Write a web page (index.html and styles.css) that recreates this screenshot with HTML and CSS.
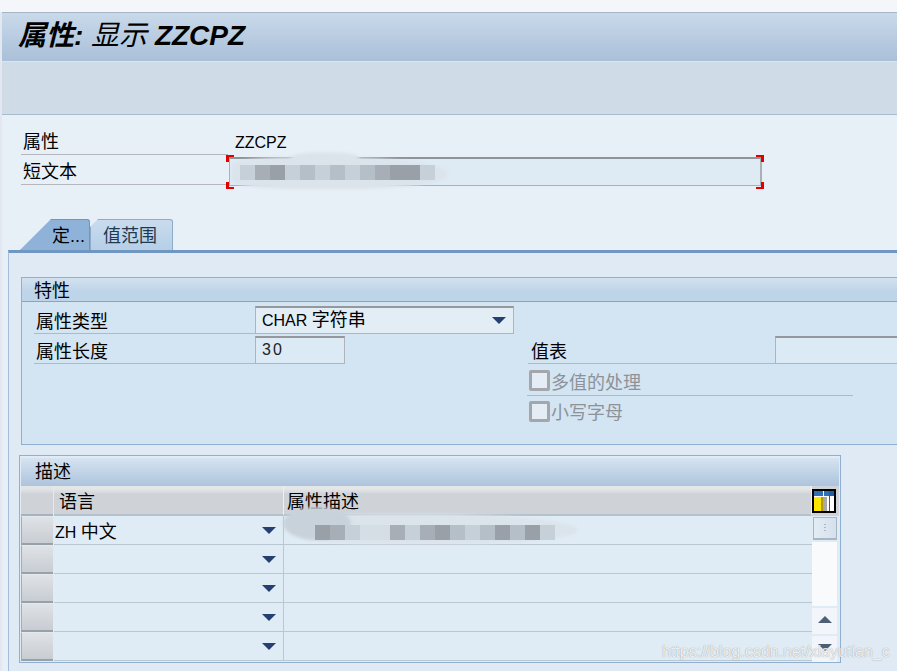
FILE: index.html
```html
<!DOCTYPE html>
<html lang="zh-CN">
<head>
    <meta charset="UTF-8">
    <meta name="viewport" content="width=device-width, initial-scale=1.0">
    <title>属性: 显示 ZZCPZ</title>
    <link rel="stylesheet" href="styles.css">
</head>
<body>

    <div class="top-strip"></div>

    <!-- TITLE + TOOLBAR -->
    <header class="title-bar">
        <h1>属性: <span class="title-light">显示</span> ZZCPZ</h1>
    </header>
    <div class="toolbar"></div>

    <!-- HEADER FIELDS -->
    <section class="head-fields">
        <div class="head-row">
            <label class="head-label">属性</label>
            <span class="head-value">ZZCPZ</span>
        </div>
        <div class="head-row">
            <label class="head-label">短文本</label>
            <div class="long-input">
                <i class="mark mark-tl"></i><i class="mark mark-bl"></i>
                <i class="mark mark-tr"></i><i class="mark mark-br"></i>
            </div>
        </div>
    </section>

    <!-- TABS -->
    <nav class="tabs">
        <a class="tab tab-active" href="#">定...</a>
        <a class="tab" href="#">值范围</a>
    </nav>

    <main class="panel">

        <!-- 特性 -->
        <section class="group">
            <div class="group-title">特性</div>
            <div class="group-body">
                <div class="form-row">
                    <label class="form-label">属性类型</label>
                    <div class="combo"><span>CHAR <span class="cjk">字符串</span></span><i class="arrow combo-arrow"></i></div>
                </div>
                <div class="form-row">
                    <label class="form-label">属性长度</label>
                    <div class="input input-short">30</div>
                    <label class="form-label form-label-right">值表</label>
                    <div class="input input-right"></div>
                </div>
                <div class="check-row check-row-line">
                    <span class="checkbox"></span><span>多值的处理</span>
                </div>
                <div class="check-row">
                    <span class="checkbox"></span><span>小写字母</span>
                </div>
            </div>
        </section>

        <!-- 描述 -->
        <section class="table-box">
            <div class="table-title">描述</div>
            <div class="table-head">
                <div class="sel-head"></div>
                <div class="col-lang col-head">语言</div>
                <div class="col-desc col-head">属性描述</div>
                <div class="col-config">
                    <svg width="24" height="24" viewBox="0 0 24 24">
                        <rect width="24" height="24" fill="#000"/>
                        <rect x="2" y="2" width="20" height="20" fill="#fff"/>
                        <rect x="2" y="2" width="9" height="5" fill="#2f6fb5"/>
                        <rect x="12" y="2" width="5" height="5" fill="#2f6fb5"/>
                        <rect x="18" y="2" width="4" height="5" fill="#1f5fa5"/>
                        <rect x="2" y="8" width="7" height="14" fill="#ffe600"/>
                        <rect x="9" y="8" width="2" height="14" fill="#b09a00"/>
                        <rect x="11" y="8" width="4" height="14" fill="#a8a8a8"/>
                        <rect x="17" y="2" width="1" height="20" fill="#555"/>
                    </svg>
                </div>
            </div>
            <div class="table-wrap">
                <div class="table-rows">
                    <div class="row">
                        <div class="sel"></div>
                        <div class="col-lang cell"><span>ZH <span class="cjk">中文</span></span><i class="arrow"></i></div>
                        <div class="col-desc cell"></div>
                    </div>
                    <div class="row">
                        <div class="sel"></div>
                        <div class="col-lang cell"><span></span><i class="arrow"></i></div>
                        <div class="col-desc cell"></div>
                    </div>
                    <div class="row">
                        <div class="sel"></div>
                        <div class="col-lang cell"><span></span><i class="arrow"></i></div>
                        <div class="col-desc cell"></div>
                    </div>
                    <div class="row">
                        <div class="sel"></div>
                        <div class="col-lang cell"><span></span><i class="arrow"></i></div>
                        <div class="col-desc cell"></div>
                    </div>
                    <div class="row">
                        <div class="sel"></div>
                        <div class="col-lang cell"><span></span><i class="arrow"></i></div>
                        <div class="col-desc cell"></div>
                    </div>
                </div>
                <div class="scrollbar">
                    <div class="thumb"><span class="grip"></span></div>
                    <div class="track"></div>
                    <div class="scroll-btn"><i class="arrow-up"></i></div>
                    <div class="scroll-btn"><i class="arrow arrow-down"></i></div>
                </div>
            </div>
        </section>
    </main>

    <!-- BLURRED-OUT TEXT -->
    <div class="smudge smudge-field"></div>
    <div class="smudge smudge-field-top"></div>
    <div class="mosaic mosaic-field">
        <b class="m1"></b><b class="m3"></b><b class="m4"></b><b class="m1"></b><b class="m2"></b><b class="m1"></b><b class="m2"></b><b class="m1"></b><b class="m2"></b><b class="m3"></b><b class="m4"></b><b class="m4"></b><b class="m1"></b>
    </div>
    <div class="smudge smudge-table"></div>
    <div class="smudge smudge-table-blob"></div>
    <div class="mosaic mosaic-table">
        <b class="m4"></b><b class="m3"></b><b class="m1"></b><b class="m0"></b><b class="m0"></b><b class="m3"></b><b class="m1"></b><b class="m3"></b><b class="m4"></b><b class="m2"></b><b class="m1"></b><b class="m2"></b><b class="m4"></b><b class="m2"></b><b class="m4"></b><b class="m1"></b>
    </div>

    <div class="watermark">https://blog.csdn.net/xiayutian_c</div>

</body>
</html>
```

FILE: styles.css
```css
* { margin: 0; padding: 0; box-sizing: border-box; }

html, body { height: 100%; }

body {
    width: 897px; height: 671px; overflow: hidden; position: relative;
    background: linear-gradient(90deg, #e3e7f1 2px, #e8f0f7 2px);
    color: #000;
    font-family: "Liberation Sans", "Noto Sans CJK SC", sans-serif;
    font-size: 16px;
}

label, .group-title, .table-title, .col-head, .tab, .check-row, .cjk { font-size: 18px; }

/* TOP */
.top-strip { height: 12px; background: #f4f6fa; }

.title-bar {
    height: 50px; margin-left: 2px; padding: 6px 0 0 16px;
    background: linear-gradient(#c9d9ea, #a9c0d8);
    border-top: 1px solid #a5b5c5; border-bottom: 1px solid #dbe5ee;
}

.title-bar h1 {
    font-size: 28px; line-height: 34px; font-weight: bold; font-style: italic;
    white-space: pre;
}

.title-light { font-weight: normal; }

.toolbar {
    height: 53px; margin-left: 2px;
    background: #cfdce7; border-bottom: 1px solid #a9bccf;
}

/* HEADER FIELDS */
.head-fields { padding: 10px 0 0 21px; }

.head-row { display: flex; height: 30px; }

.head-label {
    width: 207px; height: 30px; padding-left: 2px; line-height: 35px;
    border-bottom: 1px solid #b4b8bc;
}

.head-value { margin-left: 7px; line-height: 35px; }

.long-input {
    width: 533px; height: 29px; margin: 2px 0 0 1px; position: relative;
    background: #deeaf4;
    border: 1px solid #aab0b5; border-top: 2px solid #8f9498; border-right-width: 2px;
}

.mark { position: absolute; width: 8px; height: 7px; border: 0 solid #e00000; }
.mark-tl { left: -4px; top: -4px; border-width: 2px 0 0 3px; }
.mark-bl { left: -4px; bottom: -4px; border-width: 0 0 2px 3px; }
.mark-tr { right: -4px; top: -4px; border-width: 2px 3px 0 0; }
.mark-br { right: -4px; bottom: -4px; border-width: 0 3px 2px 0; }

/* TABS */
.tabs { display: flex; margin: 34px 0 0 20px; height: 31px; }

.tab {
    height: 31px; text-decoration: none; color: #22384f; line-height: 33px;
    width: 83px; padding-left: 12px;
    background: linear-gradient(#c9dcee, #b5cfe6);
    border: 1px solid #8fabc8; border-bottom: 0; border-radius: 3px 3px 0 0;
    clip-path: polygon(8px 0, 100% 0, 100% 100%, 0 100%, 0 8px);
}

.tab-active {
    width: 70px; padding-left: 31px; color: #000;
    background: #8fb2d9; border-color: #6f97c2;
    clip-path: polygon(31px 0, 100% 0, 100% 100%, 0 100%);
}

/* PANEL */
.panel {
    margin-left: 8px; height: 421px; padding: 24px 0 0 12px;
    background: #dfeaf4;
    border-top: 3px solid #6f97c2; border-left: 1px solid #a5bdd6;
}

.group {
    height: 168px; background: #d3e4f3;
    border: 1px solid #8fb0d0; border-right: 0;
}

.group-title {
    height: 24px; padding-left: 12px; line-height: 26px;
    background: linear-gradient(#d2e1f0, #bed4e9 60%);
    border-bottom: 1px solid #85a5c8;
}

.group-body { padding: 4px 0 0 12px; }

.form-row { display: flex; height: 30px; }

.form-label {
    width: 221px; height: 28px; padding-left: 2px; line-height: 32px;
    border-bottom: 1px solid #b4b8bc;
}

.combo {
    width: 259px; height: 28px; padding-left: 6px; line-height: 27px;
    display: flex; justify-content: space-between; align-items: center;
    background: #e2edf6;
    border: 1px solid #b0b4b8; border-top: 2px solid #95999d;
}

.combo-arrow { margin-right: 7px; }

.input {
    height: 28px; padding-left: 6px; line-height: 24px; letter-spacing: 2px; color: #222;
    background: #dceaf5;
    border: 1px solid #b0b4b8; border-top: 2px solid #95999d;
}

.input-short { width: 90px; }
.form-label-right { width: 247px; margin-left: 183px; padding-left: 3px; }
.input-right { flex: 1; border-right: 0; }

.check-row {
    display: flex; align-items: center; gap: 1px;
    width: 326px; height: 30px; margin-left: 493px; padding-left: 2px;
    color: #8c9298;
}

.check-row-line { border-bottom: 1px solid #b4b8bc; }

.checkbox {
    width: 21px; height: 21px; border-radius: 2px;
    background: #e4edf5; border: 3px solid #a3a7ab;
}

/* TABLE */
.table-box {
    width: 822px; height: 208px; margin: 10px 0 0 -2px; padding: 2px 1px;
    border: 1px solid #8fb0d0;
    background: #e0ecf5;
}

.table-title {
    height: 28px; padding-left: 14px; line-height: 28px;
    background: linear-gradient(#d6e3f1, #adc4dc);
}

.table-head { display: flex; height: 30px; }

.sel-head {
    width: 32px; margin-right: 1px;
    background: linear-gradient(#e2e4e7 3px, #cfd3d8 8px);
    border-bottom: 2px solid #a5b3bf;
}

.col-lang { width: 230px; }
.col-desc { width: 528px; }

.col-head {
    height: 30px; padding-left: 5px; line-height: 32px;
    background: linear-gradient(#e4e6e8 3px, #cfd3d8 8px);
    border-bottom: 2px solid #b5c2cd;
    border-right: 1px solid #eef0f3;
}

.col-desc.col-head { padding-left: 3px; }

.col-config {
    flex: 1; padding: 3px 0 0 0;
    background: #d0d4d8;
}

.col-config svg { display: block; }

.table-wrap { display: flex; }

.table-rows { width: 791px; }

.row { display: flex; height: 29px; }

.sel {
    width: 32px; margin-right: 1px;
    background: linear-gradient(#dfe2e6, #c8cdd3);
    border-top: 1px solid #e6e9ec; border-left: 1px solid #a5acb3; border-bottom: 2px solid #99a1a8;
}

.cell { border-bottom: 1px solid #b9c7d3; }

.cell.col-lang {
    display: flex; justify-content: space-between; align-items: center;
    padding: 0 7px 0 1px; border-right: 1px solid #b9c7d3;
}

.arrow {
    display: block; width: 0; height: 0;
    border-left: 7px solid transparent; border-right: 7px solid transparent;
    border-top: 7px solid #243f70;
}

/* SCROLLBAR */
.scrollbar { flex: 1; padding-right: 2px; display: flex; flex-direction: column; }

.thumb {
    height: 23px; margin: 1px 0 1px 1px;
    display: flex; align-items: center; justify-content: center;
    background: linear-gradient(90deg, #e2ecf4, #d4e1ec);
    border: 1px solid #a9b5c0; border-bottom-width: 2px;
}

.grip {
    width: 6px; height: 9px;
    background: conic-gradient(#a9b8c6 25%, transparent 0) 0 0 / 4px 3px;
}

.track { height: 64px; background: #f8fafc; margin-top: 1px; }

.scroll-btn {
    height: 26px; margin-top: 2px; padding-bottom: 3px; background: #f2f6fa;
    display: flex; align-items: center; justify-content: center;
}

.arrow-up {
    display: block; width: 0; height: 0;
    border-left: 7px solid transparent; border-right: 7px solid transparent;
    border-bottom: 7px solid #4c5f75;
}

.arrow-down { border-top-color: #4c5f75; }

/* BLUR OVER SENSITIVE TEXT */
.smudge { position: absolute; background: #dbe3eb; filter: blur(1.5px); }
.smudge-field { left: 232px; top: 157px; width: 215px; height: 32px; border-radius: 30% 60% 50% 30%; }
.smudge-field-top { left: 290px; top: 152px; width: 70px; height: 12px; border-radius: 50%; }
.smudge-table { left: 300px; top: 514px; width: 278px; height: 30px; border-radius: 30% 60% 50% 30%; }
.smudge-table-blob { left: 283px; top: 507px; width: 68px; height: 33px; border-radius: 50%; background: #c8d2da; }

.mosaic { position: absolute; display: flex; height: 15px; }
.mosaic b { display: block; width: 15px; height: 15px; }
.mosaic-field { left: 240px; top: 165px; }
.mosaic-table { left: 315px; top: 525px; }

.m0 { background: #d5dde5; }
.m1 { background: #c6d0d8; }
.m2 { background: #b5bfc7; }
.m3 { background: #a8aeb6; }
.m4 { background: #9aa0a8; }

.watermark {
    position: absolute; left: 662px; top: 642px;
    font-size: 16px; line-height: 20px; white-space: nowrap;
    color: rgba(255,255,255,0.85);
    text-shadow: 0 0 1px rgba(110,110,110,0.8);
}
```
